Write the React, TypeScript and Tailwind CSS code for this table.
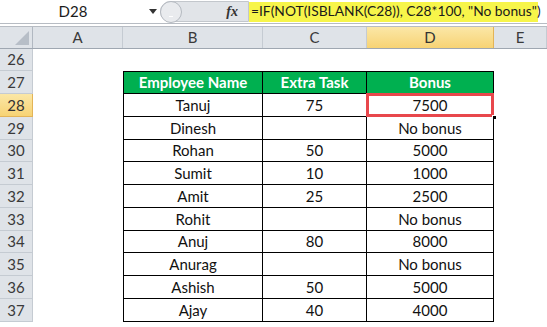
import {} from 'react';

const rows = [
  { n: 26, h: 22 },
  { n: 27, h: 23, head: true },
  { n: 28, h: 23, name: 'Tanuj', task: '75', bonus: '7500' },
  { n: 29, h: 23, name: 'Dinesh', task: '', bonus: 'No bonus' },
  { n: 30, h: 22, name: 'Rohan', task: '50', bonus: '5000' },
  { n: 31, h: 23, name: 'Sumit', task: '10', bonus: '1000' },
  { n: 32, h: 23, name: 'Amit', task: '25', bonus: '2500' },
  { n: 33, h: 23, name: 'Rohit', task: '', bonus: 'No bonus' },
  { n: 34, h: 22, name: 'Anuj', task: '80', bonus: '8000' },
  { n: 35, h: 23, name: 'Anurag', task: '', bonus: 'No bonus' },
  { n: 36, h: 23, name: 'Ashish', task: '50', bonus: '5000' },
  { n: 37, h: 23, name: 'Ajay', task: '40', bonus: '4000' },
];

const font = { fontFamily: 'Lato, "Liberation Sans", sans-serif' };

function FormulaBar() {
  return (
    <div className="flex h-[24px] bg-white border-b border-[#b7bcc3]">
      <div className="w-[146px] flex items-center justify-center text-[15px] text-[#1b1b1b]">D28</div>
      <div className="w-[14px] flex items-center justify-center">
        <svg width="8" height="5" viewBox="0 0 8 5">
          <path d="M0 0 H8 L4 5 Z" fill="#333" />
        </svg>
      </div>
      <div className="w-[89px] my-[1px] flex items-center justify-end pr-[10px] bg-[#e1e4e8] border border-[#c3c7cc] rounded-l-full relative">
        <div className="absolute left-[-1px] top-[-1px] w-[22px] h-[22px] rounded-full border border-[#b4b9c0] bg-[#e9ebee] flex items-center justify-center">
          <div className="w-[4px] h-[1px] bg-white mt-[8px]" />
        </div>
        <span className="italic font-bold text-[14px] text-[#333]" style={{ fontFamily: '"Liberation Serif", serif' }}>
          fx
        </span>
      </div>
      <div className="flex items-center">
        <div className="h-[20px] w-[289px] bg-[#f7f54a] flex items-center pl-[2px] text-[13.8px] text-[#1b1b1b] whitespace-nowrap">
          =IF(NOT(ISBLANK(C28)), C28*100, "No bonus")
        </div>
      </div>
    </div>
  );
}

function ColHead({ label, w, sel }: { label: string; w: string; sel?: boolean }) {
  return (
    <div
      className={`${w} h-full flex items-center justify-center border-r text-[15px] ${
        sel
          ? 'bg-gradient-to-b from-[#fbe7a6] to-[#f7d374] border-[#e3b457] text-[#333]'
          : 'bg-[#dfe3e8] border-[#c5cbd2] text-[#3a3a3a]'
      }`}
    >
      {label}
    </div>
  );
}

export default function App() {
  return (
    <div className="w-[547px] h-[327px] bg-white overflow-hidden" style={font}>
      <FormulaBar />
      <div className="h-[3px] bg-white border-b border-[#b7bcc3]" />
      <div className="flex h-[22px] border-b border-[#9fa7b1] bg-[#dfe3e8]">
        <div className="w-[33px] h-full border-r border-[#b1b8c1] flex items-end justify-end p-[3px]">
          <svg width="14" height="14" viewBox="0 0 14 14">
            <path d="M14 0 V14 H0 Z" fill="#b7bec7" />
          </svg>
        </div>
        <ColHead label="A" w="w-[90px]" />
        <ColHead label="B" w="w-[140px]" />
        <ColHead label="C" w="w-[104px]" />
        <ColHead label="D" w="w-[127px]" sel />
        <ColHead label="E" w="flex-1" />
      </div>
      {rows.map((r) => {
        const inTable = r.n >= 27;
        const cell = inTable ? 'border-r border-b border-black' : '';
        const top = r.n === 27 ? 'border-t' : '';
        const sel = r.n === 28;
        return (
          <div key={r.n} className="flex" style={{ height: r.h }}>
            <div
              className={`w-[33px] h-full flex items-center justify-center text-[15px] border-r border-b ${
                sel
                  ? 'bg-gradient-to-b from-[#fbe7a6] to-[#f7d374] border-[#e3b457] text-[#333]'
                  : 'bg-[#dfe3e8] border-[#c5cbd2] text-[#3a3a3a]'
              }`}
            >
              {r.n}
            </div>
            <div className="w-[90px] h-full" />
            {inTable ? (
              r.head ? (
                <>
                  <div className={`w-[140px] h-full ${cell} ${top} border-l bg-[#00b050] text-white font-bold text-[15px] flex items-center justify-center`}>
                    Employee Name
                  </div>
                  <div className={`w-[104px] h-full ${cell} ${top} bg-[#00b050] text-white font-bold text-[15px] flex items-center justify-center`}>
                    Extra Task
                  </div>
                  <div className={`w-[127px] h-full ${cell} ${top} bg-[#00b050] text-white font-bold text-[15px] flex items-center justify-center`}>
                    Bonus
                  </div>
                </>
              ) : (
                <>
                  <div className={`w-[140px] h-full ${cell} border-l text-[15px] text-[#111] flex items-center justify-center`}>
                    {r.name}
                  </div>
                  <div className={`w-[104px] h-full ${cell} text-[15px] text-[#111] flex items-center justify-center`}>
                    {r.task}
                  </div>
                  <div className={`w-[127px] h-full ${cell} relative text-[15px] text-[#111] flex items-center justify-center`}>
                    {r.bonus}
                    {sel && (
                      <>
                        <div className="absolute left-[-1px] top-[-1px] right-[-1px] bottom-[-1px] border-[3px] border-[#e8474c]" />
                        <div className="absolute right-[-4px] bottom-[-4px] w-[5px] h-[5px] bg-black border border-white" />
                      </>
                    )}
                  </div>
                </>
              )
            ) : (
              <div className="w-[371px] h-full" />
            )}
            <div className="flex-1 h-full" />
          </div>
        );
      })}
    </div>
  );
}
